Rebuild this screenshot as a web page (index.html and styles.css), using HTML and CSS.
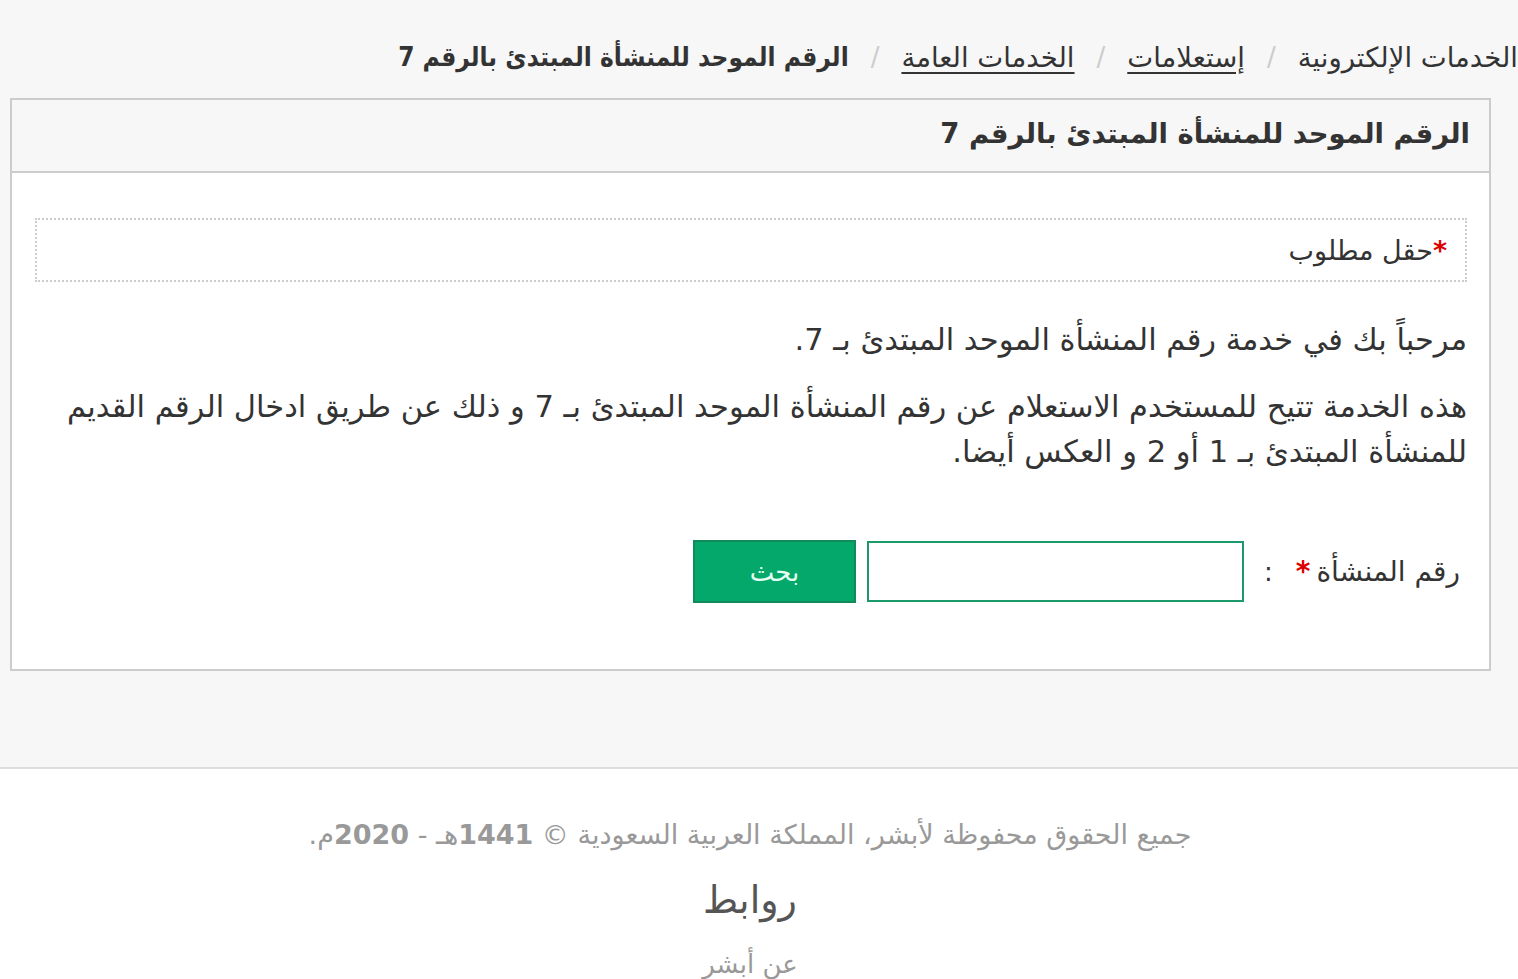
FILE: index.html
```html
<!DOCTYPE html>
<html lang="ar" dir="rtl">
<head>
<meta charset="utf-8">
<title>الرقم الموحد للمنشأة المبتدئ بالرقم 7</title>
<link rel="stylesheet" href="styles.css">
</head>
<body>
<div class="main">
  <nav class="crumbs">
    <span class="crumb">الخدمات الإلكترونية</span>
    <span class="sep">/</span>
    <a class="crumb link" href="#">إستعلامات</a>
    <span class="sep">/</span>
    <a class="crumb link" href="#">الخدمات العامة</a>
    <span class="sep">/</span>
    <span class="crumb current">الرقم الموحد للمنشأة المبتدئ بالرقم 7</span>
  </nav>
  <section class="panel">
    <header class="panel-head">الرقم الموحد للمنشأة المبتدئ بالرقم 7</header>
    <div class="panel-body">
      <div class="required-box"><span class="star">*</span>حقل مطلوب</div>
      <p class="intro">مرحباً بك في خدمة رقم المنشأة الموحد المبتدئ بـ 7.</p>
      <p class="desc">هذه الخدمة تتيح للمستخدم الاستعلام عن رقم المنشأة الموحد المبتدئ بـ 7 و ذلك عن طريق ادخال الرقم القديم للمنشأة المبتدئ بـ 1 أو 2 و العكس أيضا.</p>
      <form class="form-row">
        <label class="label">رقم المنشأة<span class="star">*</span></label>
        <span class="colon">:</span>
        <input class="input" type="text">
        <button class="btn" type="button">بحث</button>
      </form>
    </div>
  </section>
</div>
<footer class="footer">
  <p class="copy">جميع الحقوق محفوظة لأبشر، المملكة العربية السعودية © <b>1441</b>هـ - <b>2020</b>م.</p>
  <h3 class="links-title">روابط</h3>
  <p class="link-item">عن أبشر</p>
</footer>
</body>
</html>
```
FILE: styles.css
```css
html, body {
  margin: 0;
  padding: 0;
}
body {
  font-family: "DejaVu Sans", "Noto Sans", sans-serif;
  color: #333;
  background: #fff;
  direction: rtl;
}
.main {
  background: #f7f7f7;
  padding: 34px 27px 96px 10px;
  border-bottom: 2px solid #ddd;
}
.crumbs {
  display: flex;
  align-items: center;
  gap: 22px;
  font-size: 27.5px;
  line-height: 46px;
  margin-right: -27px;
  margin-bottom: 18px;
  white-space: nowrap;
}
.crumb {
  color: #333;
}
.link {
  text-decoration: underline;
  text-underline-offset: 5px;
}
.sep {
  color: #ccc;
  font-size: 26px;
}
.current {
  font-family: "DejaVu Sans Condensed", "DejaVu Sans", sans-serif;
  font-weight: bold;
  font-size: 26px;
}
.panel {
  border: 2px solid #ccc;
  background: #fff;
}
.panel-head {
  background: #f7f7f7;
  border-bottom: 2px solid #ccc;
  padding: 0 19px;
  height: 71px;
  line-height: 66px;
  font-size: 27.5px;
  font-weight: bold;
}
.panel-body {
  padding: 45px 22px 66px 23px;
}
.required-box {
  border: 2px dotted #ccc;
  height: 60px;
  line-height: 62px;
  padding: 0 18px;
  font-size: 27px;
}
.star {
  color: #d00;
  font-weight: bold;
}
.intro {
  margin: 35px 0 0;
  font-size: 30.5px;
  line-height: 45px;
}
.desc {
  margin: 22px 0 0;
  font-size: 30.5px;
  line-height: 45px;
}
.form-row {
  display: flex;
  align-items: center;
  margin-top: 66px;
  padding-right: 7px;
}
.label {
  font-size: 28px;
}
.label .star {
  margin-right: 6px;
}
.colon {
  font-size: 26px;
  margin-right: 23px;
}
.input {
  width: 377px;
  height: 61px;
  box-sizing: border-box;
  border: 2px solid #1d9a6c;
  margin-right: 20px;
  background: #fff;
  outline: none;
}
.btn {
  width: 163px;
  height: 63px;
  margin-right: 11px;
  background: #03a86a;
  border: 2px solid #118a5c;
  color: #e6fff2;
  font-family: inherit;
  font-size: 26px;
  cursor: pointer;
}
.footer {
  text-align: center;
  padding-top: 44px;
  padding-right: 18px;
}
.copy {
  margin: 0;
  font-size: 27px;
  color: #999;
  line-height: 44px;
}
.copy b {
  font-weight: bold;
}
.links-title {
  margin: 18px 0 0;
  font-size: 38px;
  font-weight: normal;
  color: #555;
  line-height: 50px;
}
.link-item {
  margin: 24px 0 0;
  font-size: 26px;
  color: #999;
}
```
